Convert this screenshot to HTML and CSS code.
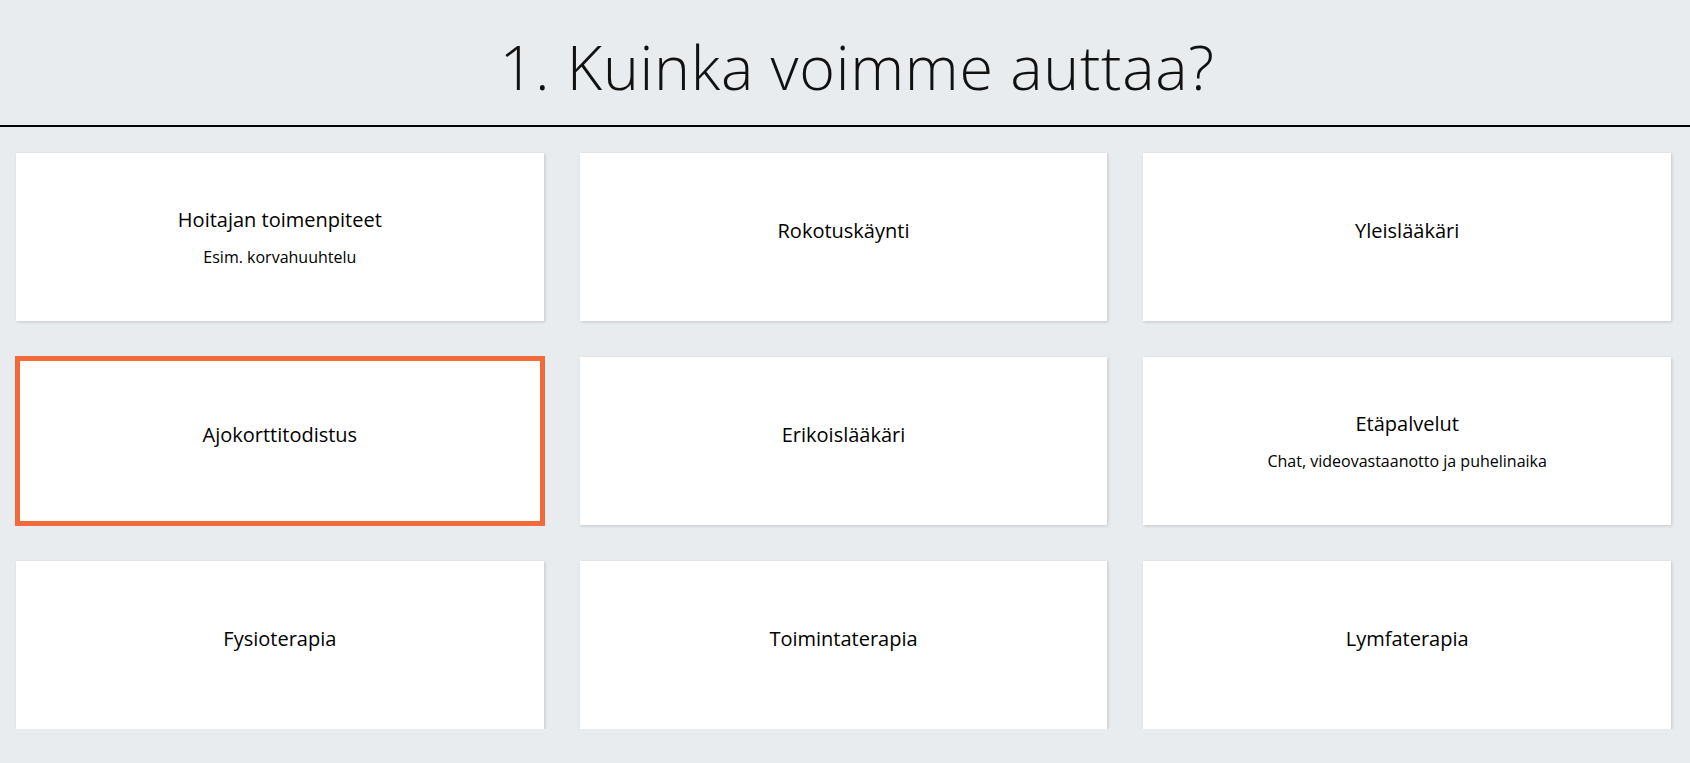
FILE: index.html
```html
<!DOCTYPE html>
<html>
  <head>
    <meta charset="utf-8">
    <link rel="stylesheet" href="styles.css">
  </head>
  <body>
    <div class="header">
      <h1 class="page-title">1. Kuinka voimme auttaa?</h1>
    </div>

    <div class="services">
      <div class="service-card">
        <div class="service-title">Hoitajan toimenpiteet</div>
        <div class="service-desc">Esim. korvahuuhtelu</div>
      </div>
      <div class="service-card">
        <div class="service-title">Rokotuskäynti</div>
      </div>
      <div class="service-card">
        <div class="service-title">Yleislääkäri</div>
      </div>
      <div class="service-card selected">
        <div class="service-title">Ajokorttitodistus</div>
      </div>
      <div class="service-card">
        <div class="service-title">Erikoislääkäri</div>
      </div>
      <div class="service-card">
        <div class="service-title">Etäpalvelut</div>
        <div class="service-desc">Chat, videovastaanotto ja puhelinaika</div>
      </div>
      <div class="service-card">
        <div class="service-title">Fysioterapia</div>
      </div>
      <div class="service-card">
        <div class="service-title">Toimintaterapia</div>
      </div>
      <div class="service-card">
        <div class="service-title">Lymfaterapia</div>
      </div>
    </div>
  </body>
</html>
```

FILE: styles.css
```css
body {
  font-family: 'Open Sans', 'Noto Sans', sans-serif;
  margin: 0;
  padding: 0;
  background-color: #e9ecef;
  color: #000;
}
.header {
  padding: 37px 0 28px 24px;
  border-bottom: 2px solid #000;
  text-align: center;
}
.page-title {
  margin: 0;
  font-size: 61px;
  font-weight: 300;
  line-height: 60px;
  letter-spacing: 0.7px;
  color: #111;
}
.services {
  display: grid;
  grid-template-columns: repeat(3, 1fr);
  grid-auto-rows: 168px;
  gap: 36px;
  padding: 26px 19px 0 16px;
}
.service-card {
  background-color: white;
  box-shadow: 1px 1px 3px rgba(0, 0, 0, 0.16);
  display: flex;
  flex-direction: column;
  justify-content: center;
  align-items: center;
  text-align: center;
  cursor: pointer;
}
.service-card.selected {
  border: 5px solid #f2693a;
  margin: -1px;
  box-shadow: none;
}
.service-title {
  font-size: 20px;
  margin-bottom: 13px;
}
.service-desc {
  font-size: 16px;
}
```
